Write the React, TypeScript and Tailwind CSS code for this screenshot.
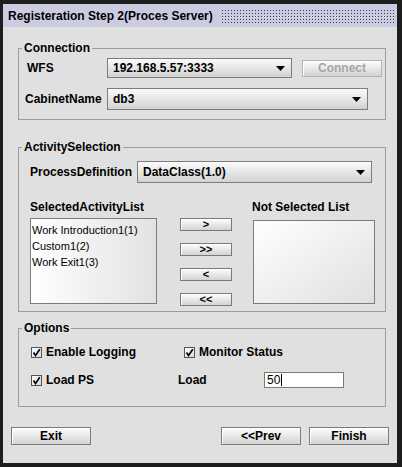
import React from "react";

const font = { fontFamily: '"Liberation Sans", Arial, sans-serif' };

function Arrow() {
  return (
    <svg width="9" height="5" viewBox="0 0 9 5" className="shrink-0">
      <polygon points="0,0 9,0 4.5,5" fill="#000" />
    </svg>
  );
}

function Combo({ value, className }: { value: string; className: string }) {
  return (
    <div
      className={`flex items-center justify-between border border-[#7c7c7c] bg-linear-to-b from-[#fbfbfb] to-[#d2d2d2] pl-[5px] pr-[6px] text-[12px] font-bold text-black ${className}`}
    >
      <span>{value}</span>
      <Arrow />
    </div>
  );
}

function Btn({
  label,
  className,
  disabled,
}: {
  label: string;
  className: string;
  disabled?: boolean;
}) {
  return (
    <button
      className={`flex items-center justify-center border bg-linear-to-b from-[#fdfdfd] to-[#d3d3d3] font-bold leading-none shadow-[inset_1px_1px_0_#ffffff] ${
        disabled ? "border-[#b4b4b4] text-[#a6a6a6]" : "border-[#7a7a7a] text-black"
      } ${className}`}
    >
      {label}
    </button>
  );
}

function Check({ label }: { label: string }) {
  return (
    <div className="flex items-center">
      <div className="flex h-[11px] w-[11px] items-center justify-center border border-[#555] bg-linear-to-br from-white to-[#d8d8d8]">
        <svg width="9" height="9" viewBox="0 0 9 9">
          <path d="M1.5 4.5 L3.5 7.5 L7.8 1.2" stroke="#000" strokeWidth="1.6" fill="none" />
        </svg>
      </div>
      <span className="ml-[4px] text-[12px] font-bold">{label}</span>
    </div>
  );
}

function Group({
  title,
  className,
  children,
}: {
  title: string;
  className: string;
  children: React.ReactNode;
}) {
  return (
    <fieldset className={`ml-[15px] w-[368px] border border-[#9c9c9c] ${className}`}>
      <legend className="ml-[3px] px-[2px] text-[12px] font-bold leading-[14px]">{title}</legend>
      {children}
    </fieldset>
  );
}

export default function App() {
  return (
    <div className="h-[467px] w-[402px] bg-[#1d1d1d] pl-[3px] pt-[4px]" style={font}>
      <div className="flex h-[459px] w-[394px] flex-col bg-[#e0e0e0] text-black">
        {/* title bar */}
        <div className="flex h-[23px] items-center bg-[#cbcbe2] pl-[5px] pr-[3px]">
          <span className="text-[12px] font-bold">Registeration Step 2(Proces Server)</span>
          <div className="ml-[8px] h-[14px] flex-1 bg-[radial-gradient(circle,#3a3a4a_0.6px,transparent_0.9px)] bg-[length:3px_3px]" />
        </div>

        <Group title="Connection" className="mt-[14px] h-[79px]">
          <div className="mt-[3px] flex h-[20px] items-center">
            <div className="w-[88px] pl-[8px] text-[12px] font-bold">WFS</div>
            <Combo value="192.168.5.57:3333" className="h-[20px] w-[185px]" />
            <Btn label="Connect" disabled className="ml-[10px] h-[17px] w-[80px] text-[12px]" />
          </div>
          <div className="mt-[10px] flex h-[22px] items-center">
            <div className="w-[88px] pl-[6px] text-[12px] font-bold">CabinetName</div>
            <Combo value="db3" className="h-[22px] w-[261px]" />
          </div>
        </Group>

        <Group title="ActivitySelection" className="mt-[20px] h-[172px]">
          <div className="mt-[7px] flex h-[22px] items-center">
            <div className="w-[118px] pl-[11px] text-[12px] font-bold">ProcessDefinition</div>
            <Combo value="DataClass(1.0)" className="h-[22px] w-[235px]" />
          </div>
          <div className="mt-[17px] flex pl-[11px]">
            <div className="flex w-[127px] flex-col">
              <div className="text-[12px] font-bold leading-[14px]">SelectedActivityList</div>
              <div className="mt-[4px] flex h-[86px] flex-col border border-[#7c7c7c] bg-linear-to-r from-white to-[#e2e2e2] pl-[1px] pt-[3px] text-[11px] leading-[16px]">
                <span>Work Introduction1(1)</span>
                <span>Custom1(2)</span>
                <span>Work Exit1(3)</span>
              </div>
            </div>
            <div className="ml-[23px] flex w-[52px] flex-col gap-[12px] pt-[18px]">
              <Btn label=">" className="h-[13px] w-[52px] text-[11px]" />
              <Btn label=">>" className="h-[13px] w-[52px] text-[11px]" />
              <Btn label="<" className="h-[13px] w-[52px] text-[11px]" />
              <Btn label="<<" className="h-[13px] w-[52px] text-[11px]" />
            </div>
            <div className="ml-[20px] flex w-[124px] flex-col">
              <div className="text-[12px] font-bold leading-[14px]">Not Selected List</div>
              <div className="ml-[1px] mt-[6px] h-[84px] w-[122px] border border-[#7c7c7c] bg-linear-to-br from-white to-[#e0e0e0]" />
            </div>
          </div>
        </Group>

        <Group title="Options" className="mt-[9px] h-[86px]">
          <div className="mt-[10px] flex h-[14px] items-center pl-[12px]">
            <div className="w-[153px]">
              <Check label="Enable Logging" />
            </div>
            <Check label="Monitor Status" />
          </div>
          <div className="mt-[13px] flex h-[16px] items-center pl-[12px]">
            <div className="w-[147px]">
              <Check label="Load PS" />
            </div>
            <div className="w-[86px] text-[12px] font-bold">Load</div>
            <div className="flex h-[16px] w-[80px] items-center border border-[#7a7a7a] bg-white pl-[2px] text-[12px]">
              50
              <span className="ml-[1px] h-[12px] w-px bg-black" />
            </div>
          </div>
        </Group>

        <div className="mt-[20px] flex items-center justify-between pl-[8px] pr-[8px]">
          <Btn label="Exit" className="h-[18px] w-[80px] text-[12px]" />
          <div className="flex gap-[8px]">
            <Btn label="<<Prev" className="h-[18px] w-[80px] text-[12px]" />
            <Btn label="Finish" className="h-[18px] w-[80px] text-[12px]" />
          </div>
        </div>
      </div>
    </div>
  );
}
